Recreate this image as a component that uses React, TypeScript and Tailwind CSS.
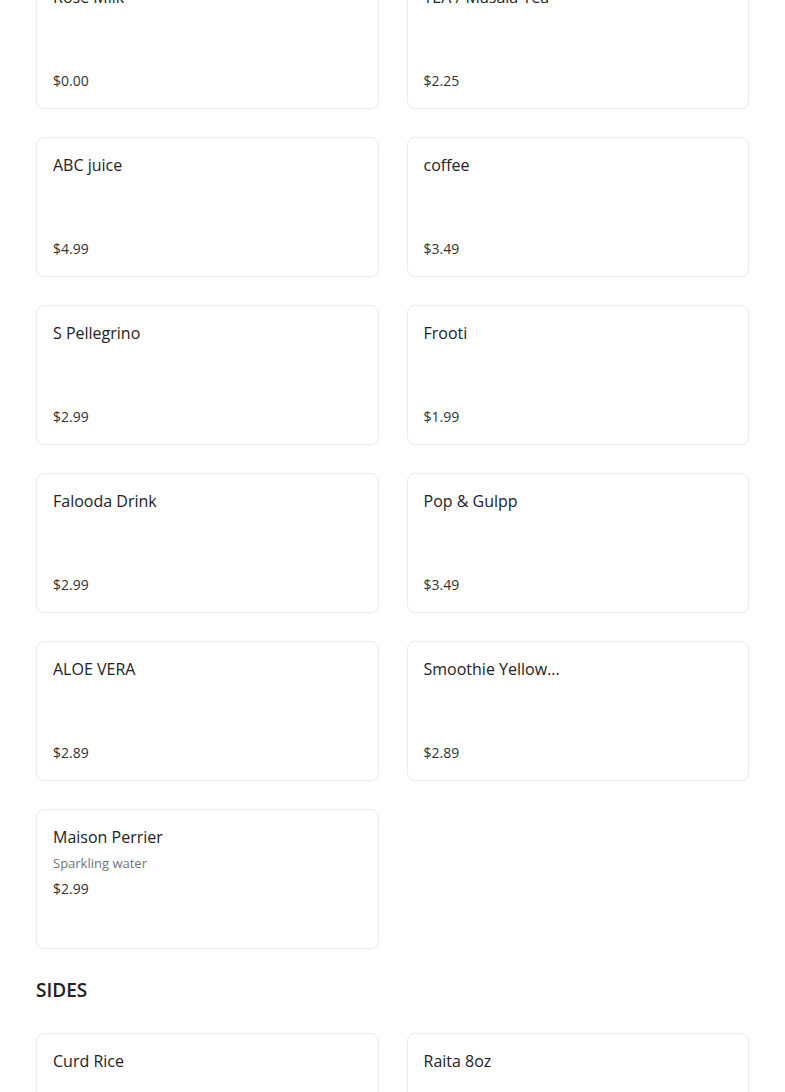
const drinks = [
  { name: 'Rose Milk', price: '$0.00' },
  { name: 'TEA / Masala Tea', price: '$2.25' },
  { name: 'ABC juice', price: '$4.99' },
  { name: 'coffee', price: '$3.49' },
  { name: 'S Pellegrino', price: '$2.99' },
  { name: 'Frooti', price: '$1.99' },
  { name: 'Falooda Drink', price: '$2.99' },
  { name: 'Pop & Gulpp', price: '$3.49' },
  { name: 'ALOE VERA', price: '$2.89' },
  { name: 'Smoothie Yellow...', price: '$2.89' },
  { name: 'Maison Perrier', price: '$2.99', desc: 'Sparkling water' },
];

const sides = [
  { name: 'Curd Rice', price: '$3.99' },
  { name: 'Raita 8oz', price: '$2.49' },
];

type Item = { name: string; price: string; desc?: string };

function ItemCard({ item }: { item: Item }) {
  return (
    <div className="flex h-[140px] flex-col rounded-lg border border-[#ebecee] bg-white p-4 shadow-[0_1px_2px_rgba(0,0,0,0.03)]">
      <p className="text-[16px] leading-[22px] font-medium text-[#222]">{item.name}</p>
      {item.desc ? (
        <p className="mt-[3px] text-[13px] leading-6 text-[#70757d]">{item.desc}</p>
      ) : null}
      <p
        className={
          item.desc
            ? 'mt-[3px] text-[14px] leading-[22px] text-[#333]'
            : 'mt-auto text-[14px] leading-[22px] text-[#333]'
        }
      >
        {item.price}
      </p>
    </div>
  );
}

export default function App() {
  return (
    <div
      className="min-h-screen overflow-hidden bg-white px-9"
      style={{ fontFamily: '"Open Sans", "Noto Sans", sans-serif' }}
    >
      <div className="-mt-[31px] grid grid-cols-2 gap-7">
        {drinks.map((d) => (
          <ItemCard item={d} key={d.name} />
        ))}
      </div>
      <h2 className="mt-[27px] text-[19px] leading-7 font-semibold text-[#222]">SIDES</h2>
      <div className="mt-[29px] grid grid-cols-2 gap-7">
        {sides.map((d) => (
          <ItemCard item={d} key={d.name} />
        ))}
      </div>
    </div>
  );
}
